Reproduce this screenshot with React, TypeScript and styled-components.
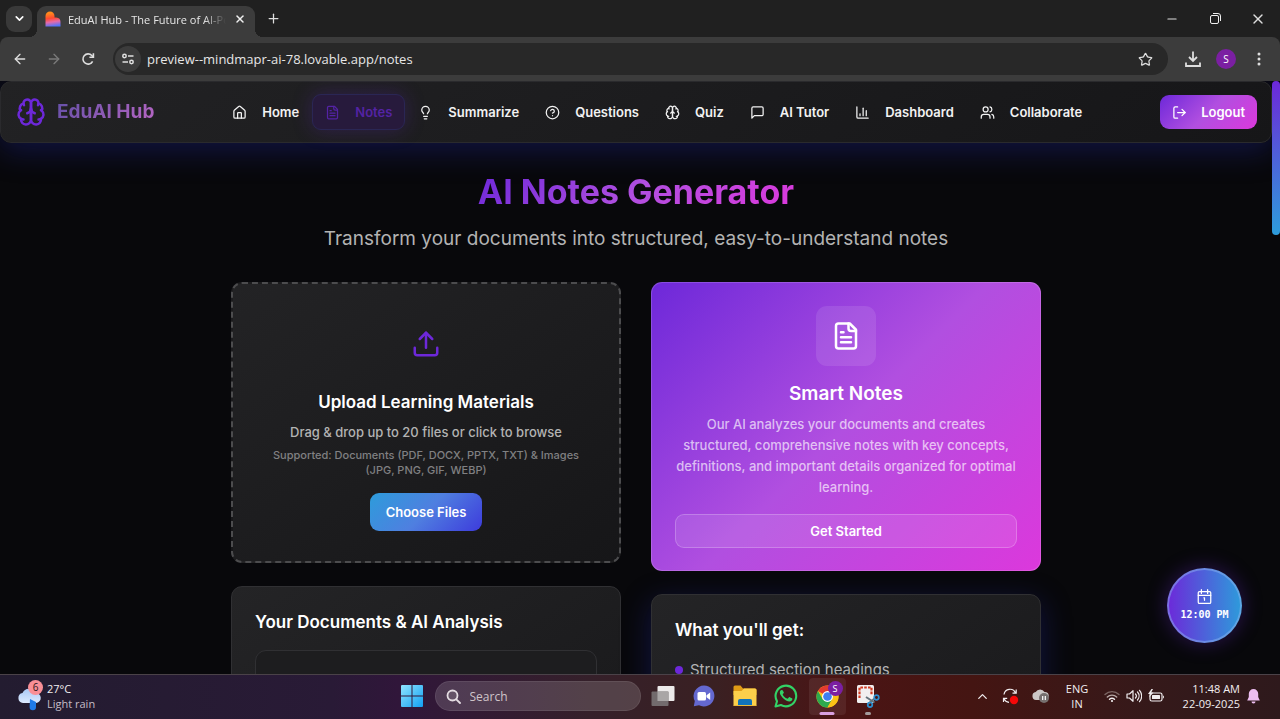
import React from "react";
import styled, { createGlobalStyle, css } from "styled-components";
import {
  ArrowLeft,
  ArrowRight,
  ChartColumn,
  ChevronDown,
  ChevronUp,
  CircleQuestionMark,
  House,
  Lightbulb,
  LogOut,
  Minus,
  Plus,
  Star,
  Upload,
  Users,
  X,
} from "lucide-react";

const uiFont = `"Inter", "Liberation Sans", sans-serif`;
const systemFont = `"Open Sans", "Noto Sans", sans-serif`;

const GlobalStyle = createGlobalStyle`
  *, *::before, *::after { box-sizing: border-box; }
  body { margin: 0; background: #08080b; }
  h1, h2, p, ul { margin: 0; padding: 0; }
  button, input { font: inherit; color: inherit; border: 0; padding: 0; background: none; }
  button { cursor: pointer; }
  input:focus { outline: none; }
  a { color: inherit; text-decoration: none; }
  svg { display: block; flex: none; }
`;

/* ---------- Browser window ---------- */

const Desktop = styled.div`
  display: flex;
  flex-direction: column;
  height: 100vh;
  overflow: hidden;
  color: #fff;
  font-family: ${uiFont};
`;

const TabStrip = styled.div`
  display: flex;
  align-items: center;
  height: 37px;
  flex: none;
  padding: 0 12px 0 6px;
  background: #202020;
  font-family: ${systemFont};
`;

const TabSearch = styled.button`
  display: grid;
  place-items: center;
  width: 26px;
  height: 26px;
  margin-right: 5px;
  border-radius: 9px;
  background: #393939;
`;

const Tab = styled.div`
  position: relative;
  display: flex;
  align-items: center;
  align-self: flex-end;
  gap: 7px;
  width: 218px;
  height: 31px;
  padding: 0 8px 5px;
  border-radius: 9px 9px 0 0;
  background: #3c3c3c;

  &::before,
  &::after {
    content: "";
    position: absolute;
    bottom: 0;
    width: 8px;
    height: 8px;
  }
  &::before {
    right: 100%;
    background: radial-gradient(circle at 0 0, transparent 8px, #3c3c3c 8px);
  }
  &::after {
    left: 100%;
    background: radial-gradient(circle at 100% 0, transparent 8px, #3c3c3c 8px);
  }
`;

const TabTitle = styled.span`
  flex: 1;
  min-width: 0;
  overflow: hidden;
  white-space: nowrap;
  font-size: 11px;
  color: #e6e6e6;
  mask-image: linear-gradient(to right, #000 86%, transparent);
`;

const PlainButton = styled.button`
  display: grid;
  place-items: center;
  width: 24px;
  height: 24px;
  color: #dedede;
`;

const TabClose = styled(PlainButton)`
  width: 14px;
  color: #f0f0f0;
`;

const NewTab = styled(PlainButton)`
  margin-left: 6px;
`;

const WindowControls = styled.div`
  display: flex;
  gap: 19px;
  margin-left: auto;
  margin-right: -2px;
`;

const Backdrop = styled.div`
  flex: none;
  background: #202020;
`;

const AddressBar = styled.div`
  display: flex;
  align-items: center;
  height: 44px;
  padding: 0 9px 0 8px;
  background: #3c3c3c;
  border-radius: 8px 8px 0 0;
  font-family: ${systemFont};
`;

const HistoryButtons = styled.div`
  display: flex;
  gap: 10px;
  margin-right: 13px;
`;

const HistoryButton = styled(PlainButton)<{ $dim?: boolean }>`
  color: ${(p) => (p.$dim ? "#7a7a7a" : "#dedede")};
`;

const UrlBox = styled.div`
  display: flex;
  align-items: center;
  flex: 1;
  gap: 6px;
  height: 32px;
  padding: 0 11px 0 2px;
  border-radius: 16px;
  background: #282828;
`;

const SiteInfo = styled.button`
  display: grid;
  place-items: center;
  width: 26px;
  height: 26px;
  border-radius: 50%;
  background: #3c3c3c;
`;

const UrlInput = styled.input`
  flex: 1;
  min-width: 0;
  font-size: 13px;
  color: #e6e6e6;
`;

const BrowserActions = styled.div`
  display: flex;
  align-items: center;
  gap: 9px;
  margin-left: 13px;
`;

const Profile = styled.button`
  width: 20px;
  height: 20px;
  margin: 0 2px;
  border-radius: 50%;
  background: #7b1fa2;
  font-size: 10px;
  line-height: 20px;
  color: #fff;
`;

/* ---------- Page ---------- */

const Viewport = styled.div`
  position: relative;
  display: flex;
  flex: 1;
  min-height: 0;
  overflow: hidden;
  background: #08080b;
`;

const Page = styled.div`
  flex: 1;
  min-width: 0;
`;

const ScrollTrack = styled.div`
  width: 8px;
  flex: none;
  background: #08080b;
`;

const ScrollThumb = styled.div`
  height: 26%;
  border-radius: 4px;
  background: linear-gradient(#6d28d9, #2d9cdb);
`;

const Header = styled.header`
  display: flex;
  align-items: center;
  justify-content: space-between;
  height: 62px;
  padding: 0 14px 0 15px;
  border: 1px solid #2a2a2d;
  border-radius: 11px;
  background: linear-gradient(145deg, #222224, #161618);
  box-shadow: 0 8px 30px rgba(28, 36, 135, 0.45);
`;

const Brand = styled.a`
  display: flex;
  align-items: center;
  gap: 11px;
  color: #6d28d9;
`;

const BrandName = styled.span`
  font-size: 19px;
  font-weight: 700;
  line-height: 26px;
  color: transparent;
  background: linear-gradient(135deg, #6450a8, #b866c4);
  background-clip: text;
`;

const Nav = styled.nav`
  display: flex;
`;

const NavLink = styled.a<{ $active?: boolean }>`
  display: flex;
  align-items: center;
  gap: 15px;
  height: 36px;
  padding: 0 12px;
  border: 1px solid transparent;
  border-radius: 9px;
  font-size: 13px;
  font-weight: 600;
  color: #f2f2f2;
  ${(p) =>
    p.$active &&
    css`
      color: #5423a4;
      border-color: #2a2654;
      background: #271a3c;
      box-shadow: 0 0 20px rgba(109, 40, 217, 0.25);
    `}
`;

const LogoutButton = styled.button`
  display: flex;
  align-items: center;
  gap: 14px;
  height: 34px;
  padding: 0 12px;
  border-radius: 9px;
  font-size: 13px;
  font-weight: 600;
  background: linear-gradient(135deg, #6d28d9, #b14fe0 50%, #dc38dc);
`;

const Main = styled.main`
  max-width: 840px;
  margin: 0 auto;
  padding: 30px 15px;
`;

const Title = styled.h1`
  width: fit-content;
  margin: 0 auto 15px;
  font-size: 34px;
  font-weight: 700;
  line-height: 38px;
  color: transparent;
  background: linear-gradient(135deg, #6d28d9, #b14fe0 50%, #dc38dc);
  background-clip: text;
`;

const Subtitle = styled.p`
  margin-bottom: 30px;
  font-size: 19px;
  line-height: 26px;
  text-align: center;
  color: #b3b3b3;
`;

const Columns = styled.div`
  display: grid;
  grid-template-columns: 1fr 1fr;
  gap: 30px;
`;

const Column = styled.div`
  display: flex;
  flex-direction: column;
  gap: 23px;
`;

const Card = styled.section<{ $glow?: boolean }>`
  height: 300px;
  padding: 23px;
  border: 1px solid #303033;
  border-radius: 11px;
  background: linear-gradient(145deg, #242426, #161618);
  box-shadow: ${(p) => (p.$glow ? "0 8px 30px rgba(28, 36, 135, 0.45)" : "none")};
`;

const UploadCard = styled.section`
  display: flex;
  flex-direction: column;
  align-items: center;
  padding: 30px;
  border: 2px dashed #4c4c4e;
  border-radius: 11px;
  background: linear-gradient(145deg, #232325, #161618);
  text-align: center;
`;

const SmartCard = styled.section`
  display: flex;
  flex-direction: column;
  align-items: center;
  padding: 23px 23px 22px;
  border: 1px solid rgba(255, 255, 255, 0.16);
  border-radius: 11px;
  background: linear-gradient(135deg, #6d28d9, #b14fe0 50%, #dc38dc) border-box;
  text-align: center;
`;

const IconBox = styled.div<{ $filled?: boolean }>`
  display: grid;
  place-items: center;
  width: 60px;
  height: 60px;
  margin-bottom: 16px;
  border-radius: 11px;
  color: ${(p) => (p.$filled ? "#fff" : "#6d28d9")};
  background: ${(p) => (p.$filled ? "rgba(255, 255, 255, 0.1)" : "none")};
`;

const CardTitle = styled.h2<{ $large?: boolean }>`
  font-size: ${(p) => (p.$large ? 19 : 17)}px;
  font-weight: 600;
  line-height: 24px;
`;

const UploadHint = styled.p`
  margin: 8px 0 5px;
  font-size: 13px;
  font-weight: 500;
  line-height: 21px;
  color: #b3b3b3;
`;

const UploadFormats = styled.p`
  margin-bottom: 15px;
  font-size: 11px;
  font-weight: 500;
  line-height: 15px;
  color: #808082;
`;

const ChooseButton = styled.button`
  height: 38px;
  padding: 0 16px;
  border-radius: 9px;
  font-size: 13px;
  font-weight: 600;
  background: linear-gradient(135deg, #2d9cdb, #4f7fe0 50%, #3d3bdc);
`;

const SmartText = styled.p`
  margin: 8px 0 16px;
  font-size: 13px;
  font-weight: 500;
  line-height: 21px;
  color: rgba(255, 255, 255, 0.66);
`;

const StartButton = styled.button`
  width: 100%;
  height: 34px;
  border: 1px solid rgba(255, 255, 255, 0.22);
  border-radius: 9px;
  font-size: 13px;
  font-weight: 600;
  background: rgba(255, 255, 255, 0.1);
`;

const DocumentBox = styled.div`
  height: 200px;
  margin-top: 16px;
  border: 1px solid #303033;
  border-radius: 11px;
  background: #1d1d1f;
`;

const FeatureList = styled.ul`
  margin-top: 16px;
  list-style: none;
`;

const Feature = styled.li`
  display: flex;
  align-items: center;
  gap: 7px;
  font-size: 15px;
  line-height: 24px;
  color: #b3b3b3;

  &::before {
    content: "";
    width: 8px;
    height: 8px;
    border-radius: 50%;
    background: #6d28d9;
  }
`;

const ClockWidget = styled.button`
  position: absolute;
  right: 38px;
  bottom: 31px;
  display: flex;
  flex-direction: column;
  align-items: center;
  justify-content: center;
  gap: 4px;
  width: 75px;
  height: 75px;
  border: 2px solid rgba(140, 180, 240, 0.5);
  border-radius: 50%;
  background: linear-gradient(to right, #6d28d9, #2d9cdb) border-box;
  box-shadow: 0 0 20px rgba(109, 40, 217, 0.35);
  font-family: "DejaVu Sans Mono", monospace;
  font-size: 10px;
  font-weight: 700;
  line-height: 14px;
  white-space: nowrap;
`;

/* ---------- Taskbar ---------- */

const Taskbar = styled.footer`
  display: grid;
  grid-template-columns: 1fr auto 1fr;
  align-items: center;
  height: 45px;
  flex: none;
  padding-bottom: 2px;
  border-top: 1px solid #4a4248;
  background: linear-gradient(
    to right,
    #231c30,
    #291a36 26%,
    #30163a 31%,
    #35202a 46%,
    #3a2022 56%,
    #4b1414 66%,
    #441512 76%,
    #35191a 90%,
    #2e191c
  );
  font-family: ${systemFont};
  font-size: 11px;
  line-height: 15px;
  color: #f2eef0;
`;

const Weather = styled.button`
  position: relative;
  display: flex;
  align-items: center;
  gap: 6px;
  justify-self: start;
  margin-left: 17px;
  text-align: left;
`;

const WeatherText = styled.span<{ $soft?: boolean }>`
  display: block;
  color: ${(p) => (p.$soft ? "#c4bec8" : "#f2eef0")};
`;

const Badge = styled.span`
  position: absolute;
  left: 11px;
  top: -1px;
  width: 15px;
  height: 15px;
  border-radius: 50%;
  background: #f98f96;
  font-size: 10px;
  line-height: 15px;
  text-align: center;
  color: #2c1418;
`;

const Apps = styled.div`
  display: flex;
  align-items: center;
  gap: 4px;
`;

const AppButton = styled.button<{ $open?: boolean }>`
  position: relative;
  display: grid;
  place-items: center;
  width: 37px;
  height: 37px;
  border-radius: 4px;
  background: ${(p) => (p.$open ? "rgba(255, 255, 255, 0.07)" : "none")};
`;

const RunningMark = styled.span<{ $active?: boolean }>`
  position: absolute;
  bottom: 0;
  left: 50%;
  width: ${(p) => (p.$active ? 15 : 6)}px;
  height: 3px;
  border-radius: 2px;
  transform: translateX(-50%);
  background: ${(p) => (p.$active ? "#d9a0e0" : "#a39a9b")};
`;

const AppBadge = styled.span`
  position: absolute;
  top: 3px;
  right: 3px;
  width: 15px;
  height: 15px;
  border-radius: 50%;
  background: #7b1fa2;
  font-size: 9px;
  line-height: 15px;
  text-align: center;
  color: #fff;
`;

const SearchBox = styled.label`
  display: flex;
  align-items: center;
  gap: 9px;
  width: 206px;
  height: 30px;
  padding: 0 10px;
  border: 1px solid rgba(255, 255, 255, 0.08);
  border-radius: 15px;
  background: rgba(255, 255, 255, 0.15);
`;

const SearchInput = styled.input`
  flex: 1;
  min-width: 0;
  font-size: 12px;
  &::placeholder {
    color: #cfc4ca;
    opacity: 1;
  }
`;

const Tray = styled.div`
  display: flex;
  align-items: center;
  justify-self: end;
  gap: 11px;
  margin-right: 20px;
`;

const Language = styled.button`
  width: 32px;
  text-align: center;
`;

const Status = styled.button`
  display: flex;
  align-items: center;
  gap: 6px;
`;

const DateTime = styled.button`
  min-width: 64px;
  text-align: right;
`;

const Notifications = styled.button`
  margin-left: -4px;
`;

const Line = styled.span`
  display: block;
`;

/* ---------- Icons ---------- */

type IconProps = { size: number; stroke?: number };

const BrainIcon = ({ size, stroke = 2 }: IconProps) => (
  <svg width={size} height={size} viewBox="0 0 24 24" fill="none" stroke="currentColor" strokeWidth={stroke} strokeLinecap="round" strokeLinejoin="round">
    <path d="M12 5a3 3 0 1 0-5.997.125 4 4 0 0 0-2.526 5.77 4 4 0 0 0 .556 6.588A4 4 0 1 0 12 18Z" />
    <path d="M12 5a3 3 0 1 1 5.997.125 4 4 0 0 1 2.526 5.77 4 4 0 0 1-.556 6.588A4 4 0 1 1 12 18Z" />
    <path d="M15 13a4.5 4.5 0 0 1-3-4 4.5 4.5 0 0 1-3 4" />
    <path d="M17.599 6.5a3 3 0 0 0 .399-1.375M6.003 5.125A3 3 0 0 0 6.401 6.5M3.477 10.896a4 4 0 0 1 .585-.396M19.938 10.5a4 4 0 0 1 .585.396M6 18a4 4 0 0 1-1.967-.516M19.967 17.484A4 4 0 0 1 18 18" />
  </svg>
);

const NoteIcon = ({ size }: IconProps) => (
  <svg width={size} height={size} viewBox="0 0 24 24" fill="none" stroke="currentColor" strokeWidth="2" strokeLinecap="round" strokeLinejoin="round">
    <path d="M15 2H6a2 2 0 0 0-2 2v16a2 2 0 0 0 2 2h12a2 2 0 0 0 2-2V7Z" />
    <path d="M14 2v4a2 2 0 0 0 2 2h4M10 9H8M16 13H8M16 17H8" />
  </svg>
);

const ChatIcon = ({ size }: IconProps) => (
  <svg width={size} height={size} viewBox="0 0 24 24" fill="none" stroke="currentColor" strokeWidth="2" strokeLinecap="round" strokeLinejoin="round">
    <path d="M21 15a2 2 0 0 1-2 2H7l-4 4V5a2 2 0 0 1 2-2h14a2 2 0 0 1 2 2z" />
  </svg>
);

const LovableIcon = () => (
  <svg width="16" height="16" viewBox="0 0 16 16">
    <defs>
      <linearGradient id="heart" x1="0.3" y1="0" x2="0.45" y2="1">
        <stop offset="0.1" stopColor="#ff8a1c" />
        <stop offset="0.45" stopColor="#fe4a30" />
        <stop offset="0.7" stopColor="#e66aa8" />
        <stop offset="1" stopColor="#4f73ff" />
      </linearGradient>
    </defs>
    <path d="M5 .5A4.500 4.500 0 0 1 9.500 5v1.500h1.800A4.500 4.500 0 0 1 15.500 11v4.500H.500V5A4.500 4.500 0 0 1 5 .5Z" fill="url(#heart)" />
  </svg>
);

const ReloadIcon = () => (
  <svg width="16" height="16" viewBox="0 0 16 16" fill="none" stroke="currentColor" strokeWidth="1.600">
    <path d="M12.600 10.300A5.100 5.100 0 1 1 11.800 4.500L13.200 6" />
    <path d="M13.400 2.300v4h-4" />
  </svg>
);

const TuneIcon = () => (
  <svg width="14" height="14" viewBox="0 0 14 14" fill="none" stroke="#e0e0e0" strokeWidth="1.500">
    <circle cx="3.500" cy="4" r="1.700" />
    <path d="M7 4h5.500M1.500 10H7" />
    <circle cx="10.500" cy="10" r="1.700" />
  </svg>
);

const DownloadIcon = () => (
  <svg width="18" height="18" viewBox="0 0 18 18" fill="none" stroke="currentColor" strokeWidth="1.800">
    <path d="M9 1.500v9M5 7l4 4 4-4M2 12.500V16h14v-3.500" />
  </svg>
);

const MoreIcon = () => (
  <svg width="16" height="16" viewBox="0 0 16 16" fill="currentColor">
    <circle cx="8" cy="3" r="1.500" />
    <circle cx="8" cy="8" r="1.500" />
    <circle cx="8" cy="13" r="1.500" />
  </svg>
);

const RestoreIcon = () => (
  <svg width="11" height="11" viewBox="0 0 11 11" fill="none" stroke="#f0f0f0">
    <rect x="0.500" y="2.500" width="8" height="8" rx="1.500" />
    <path d="M3 .5h5A2.500 2.500 0 0 1 10.500 3v5" />
  </svg>
);

const CalendarIcon = () => (
  <svg width="15" height="15" viewBox="0 0 24 24" fill="none" stroke="currentColor" strokeWidth="2" strokeLinecap="round" strokeLinejoin="round">
    <rect x="2" y="4" width="20" height="19" rx="2" />
    <path d="M7 1v6M17 1v6M2 10h20M11 14h1v4" />
  </svg>
);

const RainIcon = () => (
  <svg width="24" height="30" viewBox="0 0 24 30">
    <defs>
      <linearGradient id="cloud" x1="0" y1="0" x2="0" y2="1">
        <stop offset="0" stopColor="#a8c8f5" />
        <stop offset="1" stopColor="#dceaff" />
      </linearGradient>
    </defs>
    <path d="M6 22a5 5 0 0 1-.5-9.900A7 7 0 0 1 18.500 12a5 5 0 0 1 .500 10Z" fill="url(#cloud)" />
    <path d="M13 18l6 3v5a3.200 3.200 0 0 1-6.400 0Z" fill="#1f7ae8" />
  </svg>
);

const WindowsIcon = () => (
  <svg width="22" height="22" viewBox="0 0 22 22">
    <defs>
      <linearGradient id="win" x1="0" y1="0" x2="1" y2="1">
        <stop offset="0" stopColor="#8fe4ff" />
        <stop offset="1" stopColor="#12a0f2" />
      </linearGradient>
    </defs>
    <path d="M0 1a1 1 0 0 1 1-1h9.500v10.500H0ZM11.500 0H21a1 1 0 0 1 1 1v9.500H11.500ZM0 11.500h10.500V22H1a1 1 0 0 1-1-1ZM11.500 11.500H22V21a1 1 0 0 1-1 1h-9.500Z" fill="url(#win)" />
  </svg>
);

const SearchIcon = () => (
  <svg width="15" height="15" viewBox="0 0 15 15" fill="rgba(255,255,255,.12)" stroke="#e4dce2" strokeWidth="1.800" strokeLinecap="round">
    <circle cx="6.500" cy="6.500" r="5" />
    <path d="M10.300 10.300 14 14" />
  </svg>
);

const TaskViewIcon = () => (
  <svg width="24" height="22" viewBox="0 0 24 22">
    <rect x="6.500" y="1" width="17" height="15" rx="1" fill="#eceaea" />
    <rect x="0.500" y="6.500" width="17" height="14.500" rx="1" fill="#757071" fillOpacity="0.950" />
    <path d="M6.500 6.500h11V16h-11Z" fill="#a9a6a6" />
  </svg>
);

const VideoChatIcon = () => (
  <svg width="22" height="22" viewBox="0 0 22 22">
    <path d="M11 .5A10.500 10.500 0 1 1 6 20.300L.800 21.200 1.800 16A10.500 10.500 0 0 1 11 .5Z" fill="#6468cf" />
    <rect x="4.500" y="7" width="8.500" height="8.500" rx="1.500" fill="#fff" />
    <path d="M13.500 10.200 17.200 7.500v7.500l-3.700-2.700Z" fill="#fff" />
  </svg>
);

const FolderIcon = () => (
  <svg width="24" height="22" viewBox="0 0 24 22">
    <path d="M.5 2a1.500 1.500 0 0 1 1.500-1.500h5.500L10 3.500h12A1.500 1.500 0 0 1 23.500 5v5H.5Z" fill="#e09b16" />
    <path d="M.5 6h8L11 3.500h11A1.500 1.500 0 0 1 23.500 5v15.500h-23Z" fill="#fccf4b" />
    <path d="M5 20.500V16a2 2 0 0 1 2-2h10a2 2 0 0 1 2 2v4.500Z" fill="#1173b9" />
    <path d="M.5 20h23v1H.5Z" fill="#e9b93a" />
  </svg>
);

const WhatsAppIcon = () => (
  <svg width="24" height="24" viewBox="0 0 24 24">
    <path d="M1.500 22.500 3 17.200A10.300 10.300 0 1 1 6.900 21Z" fill="none" stroke="#32d266" strokeWidth="2.100" strokeLinejoin="round" />
    <path d="M8.700 6.600c-.3-.6-.5-.6-.9-.6-1.200 0-2 1.300-2 2.600 0 1.600 1.200 3.400 2.800 5.100 2.200 2.300 4.800 3.800 6.900 3.800 1.500 0 2.900-1.100 2.900-2.500 0-.4-.1-.5-.5-.7l-2.200-1.100c-.4-.2-.6-.1-.9.2l-.9 1.100c-.2.2-.4.3-.8.100-2-.9-3.400-2.100-4.300-3.900-.2-.3-.1-.5.1-.7l.8-.9c.2-.3.200-.5.1-.8Z" fill="#32d266" />
  </svg>
);

const ChromeIcon = () => (
  <svg width="23" height="23" viewBox="0 0 24 24">
    <circle cx="12" cy="12" r="11.500" fill="#fbc116" />
    <path d="M12 12 2.040 6.250A11.500 11.500 0 0 1 21.960 6.250H12Z" fill="#e33b2e" />
    <path d="M2.040 6.250A11.500 11.500 0 0 0 12 23.500L17 14.900 12 12 7 14.900Z" fill="#2da94f" />
    <path d="M12 6.500h10.100A11.500 11.500 0 0 1 12 23.500l4.800-8.600Z" fill="#fbc116" />
    <circle cx="12" cy="12" r="5.700" fill="#fff" />
    <circle cx="12" cy="12" r="4.500" fill="#3d7ff0" />
  </svg>
);

const SnipIcon = () => (
  <svg width="24" height="24" viewBox="0 0 24 24">
    <rect x="1" y="1" width="17" height="18" rx="1.500" fill="#f1eff0" />
    <path d="M3.500 14V3.500H15.500V11" fill="none" stroke="#d23b22" strokeWidth="2.200" strokeDasharray="2.600 1.200" />
    <path d="m10 13 8.500 5.500M18.500 14.500 12 20" stroke="#65747d" strokeWidth="2" />
    <circle cx="20.500" cy="13.500" r="2.300" fill="none" stroke="#2c8fd0" strokeWidth="1.700" />
    <circle cx="14" cy="20.800" r="2.300" fill="none" stroke="#2c8fd0" strokeWidth="1.700" />
  </svg>
);

const SyncIcon = () => (
  <svg width="19" height="18" viewBox="0 0 19 18" fill="none" stroke="currentColor" strokeWidth="1.200">
    <path d="M3 7.500A6 6 0 0 1 14.500 6M15.200 2.500V6.200h-3.700M8 15.300A6 6 0 0 1 3 11.500M2.500 15v-3.700h3.700" />
    <circle cx="13" cy="13" r="4.200" fill="#f50808" stroke="none" />
  </svg>
);

const CloudPausedIcon = () => (
  <svg width="19" height="16" viewBox="0 0 19 16">
    <path d="M5 12a4 4 0 0 1-.300-7.900A5 5 0 0 1 13.500 4 4 4 0 0 1 14 12Z" fill="#cbc7c6" />
    <circle cx="13" cy="10" r="5" fill="#76706f" />
    <path d="M11.700 8v4M14.300 8v4" stroke="#fff" strokeWidth="1.200" />
  </svg>
);

const WifiIcon = () => (
  <svg width="16" height="14" viewBox="0 0 16 14" fill="none" strokeWidth="1.400" strokeLinecap="round">
    <path d="M1 5.500a10 10 0 0 1 14 0" stroke="#7c6664" />
    <path d="M3.300 8a6.800 6.800 0 0 1 9.400 0" stroke="#b8a8a6" />
    <path d="M5.500 10.300a3.700 3.700 0 0 1 5 0" stroke="#f2eef0" />
    <circle cx="8" cy="12" r="1.100" fill="#f2eef0" />
  </svg>
);

const VolumeIcon = () => (
  <svg width="16" height="14" viewBox="0 0 16 14" fill="none" stroke="currentColor" strokeWidth="1.200" strokeLinecap="round" strokeLinejoin="round">
    <path d="M1 5h2.500L7 1.700v10.600L3.500 9H1ZM9.500 5a3 3 0 0 1 0 4M11.500 3a6 6 0 0 1 0 8M13.500 1.300a8.500 8.500 0 0 1 0 11.400" />
  </svg>
);

const BatteryIcon = () => (
  <svg width="17" height="14" viewBox="0 0 17 14">
    <rect x="2" y="4" width="12" height="8" rx="1.800" fill="none" stroke="currentColor" strokeWidth="1.200" />
    <rect x="4" y="6" width="8" height="4" rx="0.500" fill="currentColor" />
    <path d="M15 6.500c1.300 0 1.300 3 0 3ZM3.500 0 0 5h2.300L1 8.500 5.500 3.500H3.200L5 0Z" fill="currentColor" />
  </svg>
);

const BellIcon = () => (
  <svg width="13" height="15" viewBox="0 0 13 15" fill="#ecbdf0">
    <path d="M6.500 0A4.700 4.700 0 0 1 11.200 4.700V8l1.600 3.500H.2L1.800 8V4.700A4.700 4.700 0 0 1 6.500 0ZM4.500 12.500h4a2 2 0 0 1-4 0Z" />
  </svg>
);

/* ---------- Data ---------- */

const navItems = [
  { label: "Home", icon: <House size={15} /> },
  { label: "Notes", icon: <NoteIcon size={15} />, active: true },
  { label: "Summarize", icon: <Lightbulb size={15} /> },
  { label: "Questions", icon: <CircleQuestionMark size={15} /> },
  { label: "Quiz", icon: <BrainIcon size={15} /> },
  { label: "AI Tutor", icon: <ChatIcon size={15} /> },
  { label: "Dashboard", icon: <ChartColumn size={15} /> },
  { label: "Collaborate", icon: <Users size={15} /> },
];

export default function App() {
  return (
    <Desktop>
      <GlobalStyle />
      <TabStrip>
        <TabSearch aria-label="Search tabs">
          <ChevronDown size={13} strokeWidth={3} />
        </TabSearch>
        <Tab>
          <LovableIcon />
          <TabTitle>EduAI Hub - The Future of AI-Powered Learning</TabTitle>
          <TabClose aria-label="Close tab">
            <X size={12} strokeWidth={3} />
          </TabClose>
        </Tab>
        <NewTab aria-label="New tab">
          <Plus size={15} />
        </NewTab>
        <WindowControls>
          <PlainButton aria-label="Minimize">
            <Minus size={14} strokeWidth={2} />
          </PlainButton>
          <PlainButton aria-label="Restore">
            <RestoreIcon />
          </PlainButton>
          <PlainButton aria-label="Close window">
            <X size={16} strokeWidth={2} />
          </PlainButton>
        </WindowControls>
      </TabStrip>
      <Backdrop>
        <AddressBar>
          <HistoryButtons>
            <HistoryButton aria-label="Back">
              <ArrowLeft size={16} />
            </HistoryButton>
            <HistoryButton aria-label="Forward" $dim>
              <ArrowRight size={16} />
            </HistoryButton>
            <HistoryButton aria-label="Reload">
              <ReloadIcon />
            </HistoryButton>
          </HistoryButtons>
          <UrlBox>
            <SiteInfo aria-label="Site information">
              <TuneIcon />
            </SiteInfo>
            <UrlInput aria-label="Address" defaultValue="preview--mindmapr-ai-78.lovable.app/notes" />
            <PlainButton aria-label="Bookmark">
              <Star size={15} />
            </PlainButton>
          </UrlBox>
          <BrowserActions>
            <PlainButton aria-label="Downloads">
              <DownloadIcon />
            </PlainButton>
            <Profile>S</Profile>
            <PlainButton aria-label="Menu">
              <MoreIcon />
            </PlainButton>
          </BrowserActions>
        </AddressBar>
      </Backdrop>

      <Viewport>
        <Page>
          <Header>
            <Brand href="#home">
              <BrainIcon size={30} />
              <BrandName>EduAI Hub</BrandName>
            </Brand>
            <Nav>
              {navItems.map((item) => (
                <NavLink key={item.label} href={`#${item.label}`} $active={item.active}>
                  {item.icon}
                  {item.label}
                </NavLink>
              ))}
            </Nav>
            <LogoutButton>
              <LogOut size={15} />
              Logout
            </LogoutButton>
          </Header>
          <Main>
            <Title>AI Notes Generator</Title>
            <Subtitle>Transform your documents into structured, easy-to-understand notes</Subtitle>
            <Columns>
              <Column>
                <UploadCard>
                  <IconBox>
                    <Upload size={30} />
                  </IconBox>
                  <CardTitle>Upload Learning Materials</CardTitle>
                  <UploadHint>Drag &amp; drop up to 20 files or click to browse</UploadHint>
                  <UploadFormats>
                    Supported: Documents (PDF, DOCX, PPTX, TXT) &amp; Images (JPG, PNG, GIF, WEBP)
                  </UploadFormats>
                  <ChooseButton>Choose Files</ChooseButton>
                </UploadCard>
                <Card>
                  <CardTitle>Your Documents &amp; AI Analysis</CardTitle>
                  <DocumentBox />
                </Card>
              </Column>
              <Column>
                <SmartCard>
                  <IconBox $filled>
                    <NoteIcon size={30} />
                  </IconBox>
                  <CardTitle $large>Smart Notes</CardTitle>
                  <SmartText>
                    Our AI analyzes your documents and creates structured, comprehensive notes with key concepts,
                    definitions, and important details organized for optimal learning.
                  </SmartText>
                  <StartButton>Get Started</StartButton>
                </SmartCard>
                <Card $glow>
                  <CardTitle>What you'll get:</CardTitle>
                  <FeatureList>
                    <Feature>Structured section headings</Feature>
                  </FeatureList>
                </Card>
              </Column>
            </Columns>
          </Main>
        </Page>
        <ScrollTrack>
          <ScrollThumb />
        </ScrollTrack>
        <ClockWidget>
          <CalendarIcon />
          12:00 PM
        </ClockWidget>
      </Viewport>

      <Taskbar>
        <Weather>
          <RainIcon />
          <span>
            <WeatherText>27°C</WeatherText>
            <WeatherText $soft>Light rain</WeatherText>
          </span>
          <Badge>6</Badge>
        </Weather>
        <Apps>
          <AppButton aria-label="Start">
            <WindowsIcon />
          </AppButton>
          <SearchBox>
            <SearchIcon />
            <SearchInput aria-label="Search" placeholder="Search" />
          </SearchBox>
          <AppButton aria-label="Task view">
            <TaskViewIcon />
          </AppButton>
          <AppButton aria-label="Chat">
            <VideoChatIcon />
          </AppButton>
          <AppButton aria-label="File Explorer">
            <FolderIcon />
          </AppButton>
          <AppButton aria-label="WhatsApp">
            <WhatsAppIcon />
          </AppButton>
          <AppButton aria-label="Chrome" $open>
            <ChromeIcon />
            <AppBadge>S</AppBadge>
            <RunningMark $active />
          </AppButton>
          <AppButton aria-label="Snipping Tool">
            <SnipIcon />
            <RunningMark />
          </AppButton>
        </Apps>
        <Tray>
          <ChevronUp size={15} />
          <SyncIcon />
          <CloudPausedIcon />
          <Language>
            <Line>ENG</Line>
            <Line>IN</Line>
          </Language>
          <Status aria-label="Network, volume and battery">
            <WifiIcon />
            <VolumeIcon />
            <BatteryIcon />
          </Status>
          <DateTime>
            <Line>11:48 AM</Line>
            <Line>22-09-2025</Line>
          </DateTime>
          <Notifications aria-label="Notifications">
            <BellIcon />
          </Notifications>
        </Tray>
      </Taskbar>
    </Desktop>
  );
}
